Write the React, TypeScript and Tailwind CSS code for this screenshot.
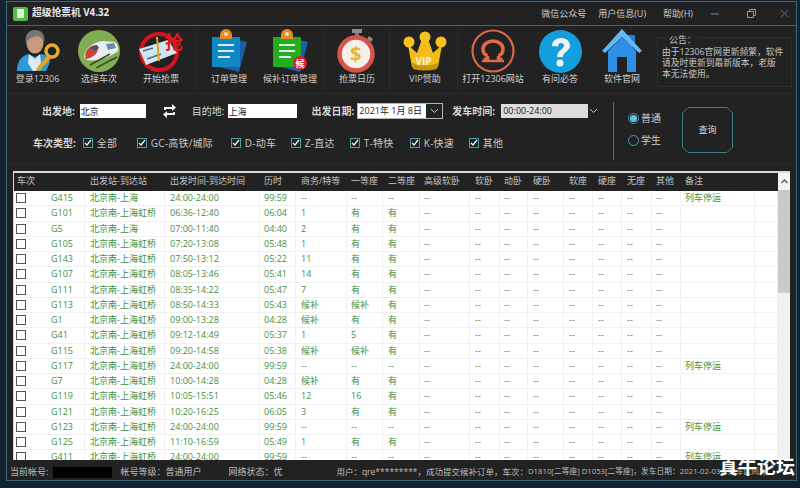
import { ReactNode } from 'react';

const rowGrid =
  'grid grid-cols-[34px_37px_80px_95px_36px_51px_36px_37px_50px_30px_28px_36px_29px_29px_30px_29px_74px_23px]';

// full-width punctuation, as the app prints it
const COMMA = '\uFF0C';
const COLON = '\uFF1A';

type Train = {
  no: string;
  to: string;
  time: string;
  dur: string;
  biz: string;
  first: string;
  second: string;
  note?: string;
};

const stopped = (no: string, to: string): Train => ({
  no,
  to,
  time: '24:00-24:00',
  dur: '99:59',
  biz: '--',
  first: '--',
  second: '--',
  note: '列车停运',
});

const hq = '北京南-上海虹桥';

const trains: Train[] = [
  stopped('G415', '北京南-上海'),
  { no: 'G101', to: hq, time: '06:36-12:40', dur: '06:04', biz: '1', first: '有', second: '有' },
  { no: 'G5', to: '北京南-上海', time: '07:00-11:40', dur: '04:40', biz: '2', first: '有', second: '有' },
  { no: 'G105', to: hq, time: '07:20-13:08', dur: '05:48', biz: '1', first: '有', second: '有' },
  { no: 'G143', to: hq, time: '07:50-13:12', dur: '05:22', biz: '11', first: '有', second: '有' },
  { no: 'G107', to: hq, time: '08:05-13:46', dur: '05:41', biz: '14', first: '有', second: '有' },
  { no: 'G111', to: hq, time: '08:35-14:22', dur: '05:47', biz: '7', first: '有', second: '有' },
  { no: 'G113', to: hq, time: '08:50-14:33', dur: '05:43', biz: '候补', first: '候补', second: '有' },
  { no: 'G1', to: hq, time: '09:00-13:28', dur: '04:28', biz: '候补', first: '有', second: '有' },
  { no: 'G41', to: hq, time: '09:12-14:49', dur: '05:37', biz: '1', first: '5', second: '有' },
  { no: 'G115', to: hq, time: '09:20-14:58', dur: '05:38', biz: '候补', first: '候补', second: '有' },
  stopped('G117', hq),
  { no: 'G7', to: hq, time: '10:00-14:28', dur: '04:28', biz: '候补', first: '有', second: '有' },
  { no: 'G119', to: hq, time: '10:05-15:51', dur: '05:46', biz: '12', first: '16', second: '有' },
  { no: 'G121', to: hq, time: '10:20-16:25', dur: '06:05', biz: '3', first: '有', second: '有' },
  stopped('G123', hq),
  { no: 'G125', to: hq, time: '11:10-16:59', dur: '05:49', biz: '1', first: '有', second: '有' },
  stopped('G411', hq),
];

function UserIcon() {
  return (
    <svg width="44" height="44" viewBox="0 0 44 44">
      <path d="M1 42c0-10 5-15 11-17l7 3 7-3c4 1 7 4 8 8l-4 9z" fill="#2f9bd6" />
      <path d="M13 25l6 5 5-5 1 9-5 8h-3l-5-8z" fill="#dcebf3" />
      <ellipse cx="19" cy="14" rx="8.500" ry="10.500" fill="#c99a7c" />
      <path d="M10 15c-2-9 3-14 9-14s11 4 9 13c-2-5-4-7-7-7-4 1-9 2-11 8z" fill="#77767a" />
      <circle cx="36" cy="22" r="6" fill="none" stroke="#e7ad2e" strokeWidth="3.400" />
      <path d="M32 26L20 40l3 2 3-2 1-3 2-1 6-7z" fill="#e3a323" />
    </svg>
  );
}

function TrainIcon() {
  return (
    <svg width="42" height="42" viewBox="0 0 42 42">
      <circle cx="21" cy="21" r="21" fill="#80ad52" />
      <path d="M6 27c1-9 9-15 19-16l11 1c3 1 5 5 4 9-7 6-22 11-31 9z" fill="#e9edf0" />
      <path d="M8 29c-2-4 0-9 4-12 3-2 7-2 8 1 1 4-5 10-12 11z" fill="#c9423e" />
      <path d="M13 18c2-2 4-3 6-3l2 3-5 3z" fill="#45566a" />
      <path d="M28 14l8-1 2 5-8 2z" fill="#6d8ca8" />
      <path d="M18 38l21-11M12 35l20-11" stroke="#3f4a35" strokeWidth="1.600" />
    </svg>
  );
}

function GrabIcon() {
  return (
    <svg width="46" height="42" viewBox="0 0 46 42">
      <circle cx="21" cy="22" r="18" fill="#222" stroke="#d3141c" strokeWidth="4" />
      <path d="M1 19l29-9 9 13-31 12z" fill="#cfe6ee" />
      <path d="M5 21l10-3M9 29l14-5" stroke="#53717f" strokeWidth="1.600" />
      <path d="M19 7l2 24" stroke="#e0a32a" strokeWidth="2" />
      <text x="27" y="19" fontSize="18" fontWeight="700" fill="#e2141c">
        抢
      </text>
    </svg>
  );
}

function NoteIcon({ body, back, badge }: { body: string; back: string; badge?: boolean }) {
  return (
    <svg width="38" height="44" viewBox="0 0 38 44">
      <path d="M9 38l20 5 8-30-8-2z" fill={back} />
      <path d="M2 8h27q1 0 1 1v28q0 1-1 1H3q-1 0-1-1z" fill={body} />
      <path d="M10 6a5 5 0 0 1 12 0v4H10z" fill="#e08a2c" />
      <circle cx="16" cy="5" r="2" fill="#f4d9a0" />
      <path d="M8 16h16M8 22h16M8 28h12" stroke="#d8eef6" strokeWidth="2" />
      {badge && (
        <>
          <circle cx="29" cy="34" r="7" fill="#d81f26" />
          <text x="24.500" y="37.500" fontSize="9" fontWeight="700" fill="#fff">
            候
          </text>
        </>
      )}
    </svg>
  );
}

function WatchIcon() {
  return (
    <svg width="40" height="44" viewBox="0 0 40 44">
      <rect x="15" y="0" width="10" height="4" fill="#8d8d8d" />
      <rect x="18" y="4" width="4" height="4" fill="#777" />
      <path d="M32 7l4 3-2 3-4-3z" fill="#8d8d8d" />
      <circle cx="19" cy="25" r="16.500" fill="#f4f1ea" stroke="#d9534a" strokeWidth="4.500" />
      <text x="13" y="32" fontSize="20" fontWeight="700" fill="#edb52e">
        $
      </text>
    </svg>
  );
}

function CrownIcon() {
  return (
    <svg width="44" height="40" viewBox="0 0 44 40">
      <path d="M5 14l9 8 5-14h6l5 14 9-8-4 22H9z" fill="#f2bd1b" />
      <path d="M9 32q13 5 26 0l-1 6q-12 3-24 0z" fill="#c8960d" />
      <circle cx="6" cy="11" r="5.500" fill="#f5c21f" />
      <circle cx="22" cy="6" r="5.500" fill="#f5c21f" />
      <circle cx="38" cy="11" r="5.500" fill="#f5c21f" />
      <text x="12.500" y="34" fontSize="10" fontWeight="700" fill="#fff7df">
        VIP
      </text>
    </svg>
  );
}

function RailIcon() {
  return (
    <svg width="44" height="44" viewBox="0 0 44 44">
      <circle cx="22" cy="22" r="20.500" fill="none" stroke="#d8674c" strokeWidth="2.200" />
      <path
        d="M16.500 27v3.500h-4M27.500 27v3.500h4M16.500 27c-3-1.500-4.500-4-4.500-7 0-4.500 4.500-8 10-8s10 3.500 10 8c0 3-1.500 5.500-4.500 7"
        fill="none"
        stroke="#e2694a"
        strokeWidth="3.600"
      />
      <path d="M11 32h22" stroke="#e2694a" strokeWidth="2.400" />
    </svg>
  );
}

function HelpIcon() {
  return (
    <svg width="43" height="43" viewBox="0 0 43 43">
      <circle cx="21.500" cy="21.500" r="21.500" fill="#139fdc" />
      <path
        d="M13 16c0-5 4-8 9-8s9 3 9 7.500c0 6-7 6-7 11.500h-6c0-7 7-7.500 7-11.500 0-1.500-1.500-2.500-3-2.500-2 0-3 1.500-3 3.500z"
        fill="#eef2f5"
      />
      <circle cx="21" cy="33" r="3.600" fill="#eef2f5" />
    </svg>
  );
}

function HomeIcon() {
  return (
    <svg width="42" height="44" viewBox="0 0 42 44">
      <path d="M26 6h8v12h-8z" fill="#2b7fd0" />
      <path d="M21 0L1 22l3 2L21 8l17 16 3-2z" fill="#62b8f4" />
      <path d="M7 22L21 8l14 14v21H26V28h-10v15H7z" fill="#2f8fe6" />
      <path d="M16 28h10v15H16z" fill="#222" />
    </svg>
  );
}

function ToolItem({ width, label, children }: { width: string; label: string; children: ReactNode }) {
  return (
    <div className={`flex flex-col items-center ${width}`}>
      <div className="flex h-[44px] items-center justify-center">{children}</div>
      <span className="whitespace-nowrap text-[9px] leading-[12px] text-[#cfcfcf]">{label}</span>
    </div>
  );
}

function Check({ label, className }: { label: string; className: string }) {
  return (
    <label className={`flex items-center gap-[3px] ${className}`}>
      <span className="flex h-[10px] w-[10px] items-center justify-center border border-[#4d9aa8] bg-[#222]">
        <svg width="8" height="8" viewBox="0 0 8 8">
          <path d="M1 4l2 2 4-5" fill="none" stroke="#f2f2f2" strokeWidth="1.300" />
        </svg>
      </span>
      <span className="whitespace-nowrap pl-px text-[10px] tracking-[0.200px] text-[#c9c9c9]">{label}</span>
    </label>
  );
}

function Chevron({ className }: { className: string }) {
  return (
    <svg width="9" height="6" viewBox="0 0 9 6" className={className}>
      <path d="M1 1l3.500 3.500L8 1" fill="none" stroke="#c4c4c4" strokeWidth="1" />
    </svg>
  );
}

function Cell({ children, pad = 'pl-[5px]' }: { children?: ReactNode; pad?: string }) {
  return <div className={`overflow-hidden whitespace-nowrap border-r border-[#f1f1f1] ${pad}`}>{children}</div>;
}

function TableRow({ t }: { t: Train }) {
  return (
    <div className={`${rowGrid} h-[15.250px] shrink-0 border-b border-[#f1f1f1] bg-white text-[9px] leading-[14px] text-[#3f8f45]`}>
      <div className="flex items-center pl-[2px]">
        <span className="h-[10px] w-[10px] border border-[#555] bg-white" />
      </div>
      <Cell pad="pl-[3px]">{t.no}</Cell>
      <Cell>{t.to}</Cell>
      <Cell>{t.time}</Cell>
      <Cell pad="pl-1">{t.dur}</Cell>
      <Cell>{t.biz}</Cell>
      <Cell pad="pl-1">{t.first}</Cell>
      <Cell>{t.second}</Cell>
      <Cell pad="pl-1">--</Cell>
      <Cell>--</Cell>
      <Cell pad="pl-1">--</Cell>
      <Cell>--</Cell>
      <Cell>--</Cell>
      <Cell>--</Cell>
      <Cell>--</Cell>
      <Cell pad="pl-1">--</Cell>
      <Cell pad="pl-1">{t.note}</Cell>
      <Cell />
    </div>
  );
}

const headers = ['车次', '', '出发站-到达站', '出发时间-到达时间', '历时', '商务/特等', '一等座', '二等座', '高级软卧', '软卧', '动卧', '硬卧', '软座', '硬座', '无座', '其他', '备注', ''];
const headerPads = ['pl-[3px]', '', 'pl-[5px]', 'pl-[5px]', 'pl-1', 'pl-[5px]', 'pl-1', 'pl-[5px]', 'pl-1', 'pl-[5px]', 'pl-1', 'pl-[5px]', 'pl-[5px]', 'pl-[5px]', 'pl-[5px]', 'pl-1', 'pl-1', ''];

export default function App() {
  return (
    <div className="relative h-[488px] w-[800px] overflow-hidden bg-[#14232f] font-['Open_Sans','Noto_Sans_CJK_SC',sans-serif]">
      <div className="ml-[6px] mr-[3px] mt-px flex h-[480px] flex-col border border-[#39687c] bg-[#222]">
        {/* title bar */}
        <div className="flex h-[24px] shrink-0 items-center border-b border-[#39687c] pl-[6px]">
          <div className="flex h-[14px] w-[15px] items-center justify-center rounded-[2px] bg-[#57b84a]">
            <span className="h-[9px] w-[7px] rounded-[1px] bg-[#dff2d8]" />
          </div>
          <span className="ml-[4px] whitespace-nowrap text-[9.750px] font-bold text-[#e8e8e8]">超级抢票机 V4.32</span>
          <div className="ml-auto flex items-center pr-[7px] text-[9px] text-[#cdcdcd]">
            <span>微信公众号</span>
            <span className="ml-[12px]">用户信息(U)</span>
            <span className="ml-[17px]">帮助(H)</span>
            <svg width="8" height="8" viewBox="0 0 8 8" className="ml-[18px]">
              <path d="M0 4h8" stroke="#7b8b92" strokeWidth="1" />
            </svg>
            <svg width="9" height="9" viewBox="0 0 9 9" className="ml-[28px]">
              <path d="M.5 2.500h6v6h-6zM2.500 2.500v-2h6v6h-2" fill="none" stroke="#8d9aa0" strokeWidth="1" />
            </svg>
            <svg width="9" height="9" viewBox="0 0 9 9" className="ml-[24px]">
              <path d="M1 1l7 7M8 1L1 8" stroke="#3f7388" strokeWidth="1" />
            </svg>
          </div>
        </div>

        {/* toolbar */}
        <div className="flex h-[68px] shrink-0 border-b border-[#2b2b2b] pt-[3px]">
          <ToolItem width="w-[61px]" label="登录12306">
            <UserIcon />
          </ToolItem>
          <ToolItem width="w-[62px]" label="选择车次">
            <TrainIcon />
          </ToolItem>
          <ToolItem width="w-[62px]" label="开始抢票">
            <GrabIcon />
          </ToolItem>
          <div className="ml-[4px] mr-[1px] h-[60px] w-px bg-[#2c2c2c]" />
          <ToolItem width="w-[62px]" label="订单管理">
            <NoteIcon body="#0f88c4" back="#1a5fa5" />
          </ToolItem>
          <ToolItem width="w-[60px]" label="候补订单管理">
            <NoteIcon body="#25ad1e" back="#1a5fa5" badge />
          </ToolItem>
          <div className="ml-[3px] mr-[1px] h-[60px] w-px bg-[#2c2c2c]" />
          <ToolItem width="w-[64px]" label="抢票日历">
            <WatchIcon />
          </ToolItem>
          <div className="mr-[3px] h-[60px] w-px bg-[#2c2c2c]" />
          <ToolItem width="w-[64px]" label="VIP赞助">
            <CrownIcon />
          </ToolItem>
          <div className="mr-px h-[60px] w-px bg-[#2c2c2c]" />
          <ToolItem width="w-[68px]" label="打开12306网站">
            <RailIcon />
          </ToolItem>
          <ToolItem width="w-[66px]" label="有问必答">
            <HelpIcon />
          </ToolItem>
          <ToolItem width="w-[58px]" label="软件官网">
            <HomeIcon />
          </ToolItem>
          <div className="relative ml-[6px] mt-[8px] h-[50px] w-[135px] border border-[#2e2e2e] px-[4px] text-[9px] leading-[11px] text-[#c4c4c4]">
            <span className="absolute -top-[4px] left-[9px] bg-[#222] px-[2px]">{`公告${COLON}`}</span>
            <p className="mt-[9px] whitespace-nowrap text-[8.750px]">
              {`由于12306官网更新频繁${COMMA}软件`}
              <br />
              {`请及时更新到最新版本${COMMA}老版`}
              <br />
              本无法使用。
            </p>
          </div>
        </div>

        {/* filter */}
        <div className="flex h-[70px] shrink-0 border-b border-[#2b2b2b]">
          <div className="w-[606px] shrink-0">
            <div className="mt-[9px] flex h-[16px] items-center text-[10px] text-[#d8d8d8]">
              <span className="ml-[35px] font-bold">出发地:</span>
              <input readOnly value="北京" className="ml-[5px] h-[14px] w-[66px] bg-white pl-[1px] text-[9px] text-[#222] outline-none" />
              <svg width="13" height="14" viewBox="0 0 13 14" className="ml-[17px]">
                <path d="M1 6V3h8V0l4 3.500L9 7V5H3v1zM12 8v3H4v3L0 10.500 4 7v2h6V8z" fill="#f2f2f2" />
              </svg>
              <span className="ml-[16px]">目的地:</span>
              <input readOnly value="上海" className="ml-[3px] h-[14px] w-[69px] bg-white pl-[1px] text-[9px] text-[#222] outline-none" />
              <span className="ml-[15px] font-bold">出发日期:</span>
              <div className="ml-[3px] flex h-[16px] w-[86px] items-center border border-[#b5b5b5] bg-[#222]">
                <span className="flex h-full w-[68px] items-center whitespace-nowrap bg-white pl-px text-[9px] text-[#222]">2021年 1月 8日</span>
                <Chevron className="ml-[4px]" />
              </div>
              <span className="ml-[9px] font-bold">发车时间:</span>
              <div className="ml-[6px] flex h-[14px] w-[87px] items-center bg-[#dcdcdc] pl-[2px] text-[9px] text-[#222]">00:00-24:00</div>
              <Chevron className="ml-[1px]" />
            </div>
            <div className="mt-[17px] flex h-[14px] items-center text-[10px]">
              <span className="ml-[26px] font-bold text-[#d8d8d8]">车次类型:</span>
              <Check label="全部" className="ml-[7px] w-[54px]" />
              <Check label="GC-高铁/城际" className="w-[94px]" />
              <Check label="D-动车" className="w-[60px]" />
              <Check label="Z-直达" className="w-[59px]" />
              <Check label="T-特快" className="w-[60px]" />
              <Check label="K-快速" className="w-[59px]" />
              <Check label="其他" className="w-[50px]" />
            </div>
          </div>
          <div className="mt-[8px] h-[58px] w-px bg-[#6a6a6a]" />
          <div className="ml-[14px] mt-[18px] flex flex-col gap-[9px] text-[10px] text-[#cfcfcf]">
            <div className="flex h-[13px] items-center gap-[2px]">
              <span className="flex h-[11px] w-[11px] items-center justify-center rounded-full border border-[#4d9aa8]">
                <span className="h-[7px] w-[7px] rounded-full bg-[#5fc6d8]" />
              </span>
              普通
            </div>
            <div className="flex h-[13px] items-center gap-[2px]">
              <span className="h-[11px] w-[11px] rounded-full border border-[#4d9aa8]" />
              学生
            </div>
          </div>
          <div className="relative ml-[21px] mt-[13px] flex h-[46px] w-[51px] items-center justify-center text-[9px] text-[#d8d8d8]">
            <svg width="51" height="46" viewBox="0 0 51 46" className="absolute inset-0">
              <path d="M6 .5h39l5.500 5.500v34L45 45.500H6L.5 40V6z" fill="none" stroke="#3f7f7f" strokeWidth="1" />
            </svg>
            查询
          </div>
        </div>

        {/* train table */}
        <div className="ml-[6px] mr-[6px] mt-[7px] flex h-[289px] shrink-0 border-l border-t-2 border-[#d9d9d9]">
          <div className="flex w-[764px] shrink-0 flex-col overflow-hidden">
            <div className={`${rowGrid} h-[18px] shrink-0 bg-[#222] text-[9px] leading-[16px] text-[#c4c4c4]`}>
              {headers.map((h, i) => (
                <div key={i} className={`whitespace-nowrap ${headerPads[i]}`}>
                  {h}
                </div>
              ))}
            </div>
            {trains.map(t => (
              <TableRow key={t.no} t={t} />
            ))}
          </div>
          <div className="flex w-[12px] shrink-0 flex-col bg-[#f1f1f1]">
            <div className="flex h-[17px] shrink-0 items-center justify-center bg-[#f4f4f4]">
              <svg width="7" height="5" viewBox="0 0 7 5">
                <path d="M.5 4L3.500 1l3 3" fill="none" stroke="#555" strokeWidth="1.300" />
              </svg>
            </div>
            <div className="h-[103px] w-full bg-[#c9c9c9]" />
          </div>
        </div>

        {/* status bar */}
        <div className="flex min-h-0 flex-1 items-center overflow-hidden whitespace-nowrap pt-[4px] text-[9px] text-[#bdbdbd]">
          <span className="ml-[3px]">当前帐号:</span>
          <span className="ml-[5px] h-[11px] w-[59px] shrink-0 bg-black" />
          <span className="ml-[8px]">{`帐号等级${COLON}普通用户`}</span>
          <span className="ml-[27px]">{`网络状态${COLON}优`}</span>
          <span className="ml-[54px] text-[8.500px]">{`用户${COLON}qre*********${COMMA}成功提交候补订单${COMMA}车次${COLON}`}</span>
          <span className="text-[7.750px]">{`D1810[二等座] D1053[二等座]${COMMA}发车日期${COLON}2021-02-03${COMMA}乘车区间${COLON})`}</span>
        </div>
      </div>

      <span className="absolute left-[719px] top-[455px] whitespace-nowrap text-[19px] font-bold leading-[24px] text-white">真牛论坛</span>
    </div>
  );
}
